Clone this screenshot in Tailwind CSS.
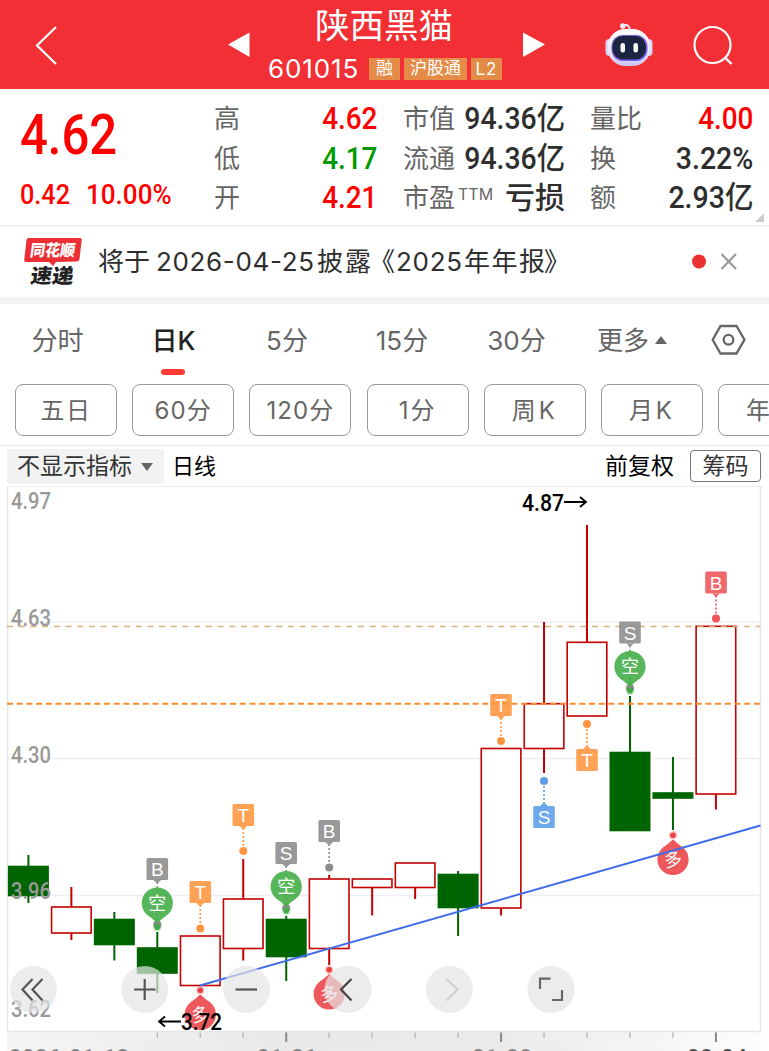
<!DOCTYPE html>
<html lang="zh-CN">
<head>
  <meta charset="UTF-8" />
  <meta name="viewport" content="width=device-width, initial-scale=1.0"/>
  <title>陕西黑猫 601015</title>
  <script src="https://cdn.jsdelivr.net/npm/@tailwindcss/browser@4"></script>
  <style>
    body {
      font-family: Inter, 'Noto Sans CJK SC', sans-serif;
    }
    .num {
      font-family: Roboto, 'Noto Sans CJK SC', sans-serif;
    }
  </style>
</head>
<body class="bg-white w-[769px] h-[1051px] overflow-hidden">

  <!-- Top Bar -->
  <header class="flex h-[89px] bg-[#f12f34] text-white">
    <svg class="w-[228px] h-[89px] shrink-0" viewBox="0 0 228 89" fill="none" stroke="#fff" stroke-width="2.2"><path d="M56 27 37 45.500 56 64"/></svg>
    <svg class="w-[22px] h-[89px] shrink-0" viewBox="0 0 22 89" fill="#fff"><path d="M0 44.500 21.500 32.500V57z"/></svg>
    <div class="w-[268px] flex flex-col items-center">
      <h1 class="text-[34.5px] leading-[52px] h-[52px]">陕西黑猫</h1>
      <div class="flex items-center gap-[4px] h-[34px] whitespace-nowrap pl-[2px]">
        <span class="text-[26px] leading-[34px] w-[97px] tracking-[.9px]">601015</span>
        <span class="bg-[#e38b47] text-[17px] leading-[21px] h-[22px] w-[31px] text-center">融</span>
        <span class="bg-[#e38b47] text-[17px] leading-[21px] h-[22px] w-[63px] text-center">沪股通</span>
        <span class="bg-[#e38b47] text-[17px] leading-[22px] h-[22px] w-[31px] text-center tracking-[1px]">L2</span>
      </div>
    </div>
    <svg class="w-[251px] h-[89px] shrink-0" viewBox="518 0 251 89" fill="none">
      <path d="M523 32.500 545 44.500 523 57z" fill="#fff"/>
      <defs>
        <linearGradient id="shell" x1="0" y1="0" x2="0" y2="1"><stop offset="0" stop-color="#fff"/><stop offset=".7" stop-color="#e6e2fb"/><stop offset="1" stop-color="#c9c3f0"/></linearGradient>
        <linearGradient id="visor" x1="0" y1="0" x2="1" y2="1"><stop offset="0" stop-color="#5d62a8"/><stop offset=".6" stop-color="#8a5cf0"/><stop offset="1" stop-color="#5b6cf5"/></linearGradient>
      </defs>
      <path d="M623 26Q629 23 630 30" stroke="#efeafa" stroke-width="2"/>
      <circle cx="622.800" cy="26" r="2.700" fill="#efeafa"/>
      <rect x="605.500" y="39" width="8" height="17" rx="4" fill="#d9d4f6"/>
      <rect x="644.500" y="39" width="8" height="17" rx="4" fill="#d9d4f6"/>
      <rect x="607.500" y="29" width="43" height="37" rx="18" fill="url(#shell)"/>
      <rect x="611.500" y="35" width="36" height="26" rx="11.500" fill="url(#visor)"/>
      <rect x="612.500" y="36" width="33.500" height="23.500" rx="10.500" fill="#1b2440"/>
      <rect x="620.500" y="43" width="4.500" height="9.500" rx="2.200" fill="#fff"/>
      <rect x="633.500" y="43" width="4.500" height="9.500" rx="2.200" fill="#fff"/>
      <circle cx="712.500" cy="45" r="18" stroke="#fff" stroke-width="2.200"/>
      <path d="M724.500 57 731.500 64" stroke="#fff" stroke-width="2.400"/>
    </svg>
  </header>

  <!-- Quote -->
  <section class="flex relative h-[138px] border-b-2 border-[#f0f0f0] pt-[10px] pl-5 text-[#2e2e2e]">
    <div class="w-[194px] text-[#fe0000] num">
      <p class="text-[56px] leading-[73px] font-medium origin-left scale-x-[.875] w-[120px]">4.62</p>
      <p class="flex text-[28px] leading-[46px] font-medium"><span class="w-[66px] origin-left scale-x-[.9]">0.42</span><span class="origin-left scale-x-[.93]">10.00%</span></p>
    </div>
    <div class="w-[163px] text-[26px] leading-[39.5px]">
      <p class="flex justify-between"><span class="text-[#666]">高</span><span class="num text-[31px] font-medium text-[#fe0000] origin-right scale-x-[.9]">4.62</span></p>
      <p class="flex justify-between"><span class="text-[#666]">低</span><span class="num text-[31px] font-medium text-[#009a00] origin-right scale-x-[.9]">4.17</span></p>
      <p class="flex justify-between"><span class="text-[#666]">开</span><span class="num text-[31px] font-medium text-[#fe0000] origin-right scale-x-[.9]">4.21</span></p>
    </div>
    <div class="w-[162px] ml-[26px] text-[26px] leading-[39.5px] whitespace-nowrap">
      <p class="flex justify-between"><span class="text-[#666]">市值</span><span class="num text-[31px] font-medium origin-right scale-x-[.915]">94.36亿</span></p>
      <p class="flex justify-between"><span class="text-[#666]">流通</span><span class="num text-[31px] font-medium origin-right scale-x-[.915]">94.36亿</span></p>
      <p class="flex justify-between"><span class="text-[#666] flex">市盈<span class="text-[16px] leading-[32px] ml-[3px]">TTM</span></span><span class="text-[30px] font-medium">亏损</span></p>
    </div>
    <div class="w-[163px] ml-[25px] text-[26px] leading-[39.5px] whitespace-nowrap">
      <p class="flex justify-between"><span class="text-[#666]">量比</span><span class="num text-[31px] font-medium text-[#fe0000] origin-right scale-x-[.9]">4.00</span></p>
      <p class="flex justify-between"><span class="text-[#666]">换</span><span class="num text-[31px] font-medium origin-right scale-x-[.92]">3.22%</span></p>
      <p class="flex justify-between"><span class="text-[#666]">额</span><span class="num text-[31px] font-medium origin-right scale-x-[.92]">2.93亿</span></p>
    </div>
    <svg class="absolute left-[755px] top-[124px] w-[9px] h-[9px]" viewBox="0 0 9 9" fill="#ccc"><path d="M9 0V9H0z"/></svg>
  </section>

  <!-- News strip -->
  <section class="flex items-center h-[70px] pl-6 pb-[2px] text-[#2e2e2e]">
    <svg class="w-[58px] h-[52px] shrink-0" viewBox="24 235 58 52">
      <path d="M29 238H80Q82 238 81.700 240L79.500 259Q79.200 261 77 261.500L56 262 53 266 49 262H26Q24 262 24.200 260L26.500 240Q27 238 29 238z" fill="#ec2f35"/>
      <g transform="skewX(-8)" font-family="Noto Sans CJK SC, sans-serif" font-weight="900">
        <text x="65.500" y="256.500" font-size="16" fill="#fff" textLength="45" lengthAdjust="spacingAndGlyphs">同花顺</text>
        <text x="69.500" y="283" font-size="20" fill="#222" textLength="43" lengthAdjust="spacingAndGlyphs">速递</text>
      </g>
    </svg>
    <svg class="ml-4 w-[594px] h-[50px] text-[26px]" viewBox="98 236 594 50" fill="#2e2e2e"><text x="98" y="271" textLength="52">将于</text><text x="156" y="271" textLength="158">2026-04-25</text><text x="317" y="271" textLength="54">披露</text><text x="369" y="271">《</text><text x="396" y="271" textLength="66">2025</text><text x="464" y="271" textLength="81">年年报</text><text x="544" y="271">》</text></svg>
    <svg class="w-[50px] h-[50px] shrink-0" viewBox="692 236 50 50"><circle cx="699" cy="261.500" r="7" fill="#ec2f2f"/><path d="M721.500 254 736 269M736 254 721.500 269" stroke="#999" stroke-width="2.200"/></svg>
  </section>
  <div class="h-[7px] bg-[#f4f4f4]"></div>

  <!-- Period tabs -->
  <nav class="flex h-[80px] text-[26px] leading-[74px] text-[#666] whitespace-nowrap">
    <a class="w-[115px] text-center">分时</a>
    <a class="w-[117px] text-center relative text-[#222] font-medium">日K<span class="absolute left-[46px] top-[65px] w-[24px] h-[6px] rounded-full bg-[#fd3a31]"></span></a>
    <a class="w-[110px] text-center">5分</a>
    <a class="w-[120px] text-center">15分</a>
    <a class="w-[109px] text-center">30分</a>
    <a class="w-[138px] pl-[26px] flex items-center gap-[6px] h-[73px]">更多<svg class="w-[12px] h-[8px] mb-[2px]" viewBox="0 0 12 8" fill="#666"><path d="M6 0 12 8H0z"/></svg></a>
    <svg class="w-[40px] h-[73px]" viewBox="709 304 40 73" fill="none" stroke="#666" stroke-width="2.300"><path d="M720.500 326H736.500L744.500 339.700 736.500 353.500H720.500L712.700 339.700z"/><circle cx="728.500" cy="339.700" r="4.800"/></svg>
  </nav>
  <div class="flex gap-[15.2px] pl-[15px] h-[61px] text-[24px] leading-[51px] text-[#666] whitespace-nowrap overflow-hidden">
    <button class="w-[102px] h-[52px] shrink-0 border border-[#999] rounded-[8px] tracking-[1.5px]">五日</button>
    <button class="w-[102px] h-[52px] shrink-0 border border-[#999] rounded-[8px] tracking-[1.2px]">60分</button>
    <button class="w-[102px] h-[52px] shrink-0 border border-[#999] rounded-[8px] tracking-[1px]">120分</button>
    <button class="w-[102px] h-[52px] shrink-0 border border-[#999] rounded-[8px] tracking-[2px]">1分</button>
    <button class="w-[102px] h-[52px] shrink-0 border border-[#999] rounded-[8px] tracking-[3px]">周K</button>
    <button class="w-[102px] h-[52px] shrink-0 border border-[#999] rounded-[8px] tracking-[3px]">月K</button>
    <button class="w-[102px] h-[52px] shrink-0 border border-[#999] rounded-[8px] tracking-[3px]">年K</button>
  </div>

  <!-- Chart toolbar -->
  <div class="flex h-[41px] border-t border-[#e8e8e8] pl-[7px] pt-[3px] text-[23px] text-black whitespace-nowrap">
    <div class="flex items-center w-[157px] h-[35px] bg-[#f2f2f2] rounded-[3px] pl-[10px] gap-[9px] text-[#333]">不显示指标<svg class="w-[12px] h-[8px]" viewBox="0 0 12 8" fill="#666"><path d="M0 0H12L6 8z"/></svg></div>
    <span class="ml-2 w-[433px] text-[22px] leading-[35px]">日线</span>
    <span class="w-[85px] leading-[35px]">前复权</span>
    <span class="w-[71px] h-[32px] mt-px border border-[#777] rounded-[4px] leading-[30px] text-center text-[#333]">筹码</span>
  </div>

  <!-- K-line chart -->
  <svg class="block w-[769px] h-[565px]" viewBox="0 486 769 565">
    <defs>
      <linearGradient id="axisBg"><stop offset="0" stop-color="#f5f5f5"/><stop offset=".35" stop-color="#e9e9e9"/><stop offset=".65" stop-color="#eaeaea"/><stop offset="1" stop-color="#fdfdfd"/></linearGradient>
    </defs>
    <rect x="7" y="1032" width="754" height="19" fill="url(#axisBg)"/>
    <path d="M7 622H760M7 758.500H760M7 895.500H760" stroke="#efefef" stroke-width="1.500"/>
    <rect x="7.500" y="486" width="753" height="545.500" fill="none" stroke="#e6e6e6" stroke-width="1.500"/>
    <g id="candles"></g>
    <path d="M7 626.500H760" stroke="#d9b07a" stroke-width="1.300" stroke-dasharray="6 5.700"/>
    <path d="M7 703.700H760" stroke="#fb8b2c" stroke-width="2" stroke-dasharray="6 3.700"/>
    <g id="markers"></g>
    <path d="M200 985.500 760.500 825.500" stroke="#3f6bee" stroke-width="1.900"/>
    <g class="num" font-size="24" font-weight="500" fill="#999">
      <text x="11" y="508.500" textLength="40" lengthAdjust="spacingAndGlyphs">4.97</text>
      <text x="11" y="626" textLength="40" lengthAdjust="spacingAndGlyphs">4.63</text>
      <text x="11" y="762.500" textLength="40" lengthAdjust="spacingAndGlyphs">4.30</text>
      <text x="11" y="899" textLength="40" lengthAdjust="spacingAndGlyphs">3.96</text>
      <text x="11" y="1016.500" textLength="40" lengthAdjust="spacingAndGlyphs">3.62</text>
    </g>
    <g id="buttons"></g>
    <g class="num" font-size="24" font-weight="500" fill="#000">
      <text x="522" y="510.500" textLength="42" lengthAdjust="spacingAndGlyphs">4.87</text>
      <text x="181" y="1030" textLength="41" lengthAdjust="spacingAndGlyphs">3.72</text>
    </g>
    <path d="M564 502H586M580 497 586 502 580 507M181 1021.500H160M165 1016.500 159 1021.500 165 1026.500" fill="none" stroke="#000" stroke-width="1.800"/>
    <g id="ticks"></g>
    <g class="num" font-size="22" font-weight="500" fill="#888">
      <text x="9" y="1065" textLength="120">2026-01-13</text>
      <text x="257" y="1065" textLength="60">01-21</text>
      <text x="472" y="1065" textLength="60">01-28</text>
      <text x="687" y="1065" textLength="60" fill="#555">02-04</text>
    </g>
  </svg>

  <script>
    // up/down, body top, body bottom, high, low
    const candles = [
      ['d', 866, 896, 855, 903], ['u', 907, 933, 887, 940], ['d', 919, 945, 912, 960.5],
      ['d', 947.5, 973.5, 932, 993], ['u', 936, 985.5, 936, 985.5], ['u', 899, 948.5, 859, 960.5],
      ['d', 919, 957, 916, 981], ['u', 879, 948.5, 875, 965], ['u', 879, 887.5, 879, 915.5],
      ['u', 863, 887.5, 863, 899], ['d', 874, 908, 871, 936], ['u', 748.5, 908, 748.5, 915.5],
      ['u', 703.7, 748.5, 622, 773], ['u', 642.3, 716, 525, 716], ['d', 752, 831, 696, 831],
      ['d', 792.5, 798.5, 757, 830], ['u', 626.3, 794, 626, 809.5]
    ];
    // letter, x, tag centre, dot, colour
    const tags = [
      ['B', 157.3, 869, 924.5, '#8c8c8c'], ['T', 200.3, 892, 928.5, '#ff963f'], ['T', 243.3, 815, 851, '#ff963f'],
      ['S', 286.2, 853, 908, '#8c8c8c'], ['B', 329.2, 831, 867.5, '#8c8c8c'], ['T', 501, 705, 741, '#ff963f'],
      ['S', 544, 817, 781, '#5b9deb'], ['T', 587, 760, 724, '#ff963f'], ['S', 630, 632.5, 688, '#8c8c8c'],
      ['B', 716, 582.5, 618.5, '#f05458']
    ];
    const bubbles = [
      ['空', 157.3, 903], ['空', 286.2, 886.5], ['空', 630, 666.5],
      ['多', 200.3, 1014.5], ['多', 329.2, 994], ['多', 673, 859.5]
    ];
    const buttons = [
      [33.5, 'M32.500 979 22.500 989.500 32.500 1000.500M42.500 979 32.500 989.500 42.500 1000.500', '#555'],
      [144.7, 'M134 989.500H155.500M144.700 979V1000', '#555'],
      [246.5, 'M235.500 989.500H257', '#555'],
      [348, 'M351.500 979 341 989.500 351.500 1000.500', '#444'],
      [449.5, 'M446.500 979 457.500 989.500 446.500 1000.500', '#d0d0d0'],
      [551, 'M540 989V978.700H550.500M562 990V1000H552', '#666']
    ];

    document.getElementById('candles').innerHTML = candles.map(([dir, top, bottom, high, low], i) => {
      const x = 28.4 + i * 42.97;
      if (dir === 'd') {
        return `<path d="M${x} ${high}V${low}" stroke="#006400" stroke-width="2"/>
          <rect x="${x - 20.5}" y="${top - 0.3}" width="41" height="${bottom - top + 0.6}" fill="#006400"/>`;
      }
      return `<path d="M${x} ${high}V${top}M${x} ${bottom}V${low}" stroke="#c40000" stroke-width="2"/>
        <rect x="${x - 19.8}" y="${top}" width="39.600" height="${bottom - top}" fill="#fff" stroke="#c40000" stroke-width="1.600"/>`;
    }).join('');

    const tagHtml = tags.map(([letter, x, y, dot, color]) => {
      const s = dot > y ? 1 : -1;
      return `<path d="M${x} ${y + 13 * s}V${dot}" stroke="${color}" stroke-width="1.600" stroke-dasharray="2 2"/>
        <circle cx="${x}" cy="${dot}" r="4" fill="${color}"/>
        <g opacity=".88"><rect x="${x - 10.8}" y="${y - 11}" width="21.600" height="22" rx="1.500" fill="${color}"/>
        <path d="M${x - 4} ${y + 11 * s}H${x + 4}L${x} ${y + 14.5 * s}z" fill="${color}"/></g>
        <text x="${x}" y="${y + 7}" font-family="Liberation Sans, sans-serif" font-size="19" text-anchor="middle" fill="#fff">${letter}</text>`;
    }).join('');

    const bubbleHtml = bubbles.map(([word, x, y]) => {
      const up = word === '多';
      const s = up ? -1 : 1;
      const color = up ? '#eb4144' : '#3fad43';
      return `<circle cx="${x}" cy="${y + 24.3 * s}" r="4.300" fill="${color}" opacity=".3"/><circle cx="${x}" cy="${y + 24.3 * s}" r="2.800" fill="${color}"/>
        <g opacity=".88"><circle cx="${x}" cy="${y}" r="15.600" fill="${color}"/>
        <path d="M${x - 10} ${y + 11.5 * s}L${x} ${y + 20 * s}L${x + 10} ${y + 11.5 * s}z" fill="${color}"/></g>
        <text x="${x}" y="${y + 6.5}" font-size="18" text-anchor="middle" fill="#fff" ${up ? `transform="rotate(-10 ${x} ${y})"` : ''}>${word}</text>`;
    }).join('');
    document.getElementById('markers').innerHTML = tagHtml + bubbleHtml;

    document.getElementById('buttons').innerHTML = buttons.map(([x, d, color]) =>
      `<circle cx="${x}" cy="989.500" r="23.500" fill="#e4e4e4" opacity=".7"/><path d="${d}" fill="none" stroke="${color}" stroke-width="2.200"/>`
    ).join('');

    let ticks = '';
    for (let i = 3; i < 17; i++) {
      const x = 28.4 + i * 42.97;
      const major = i % 5 === 1;
      ticks += `<path d="M${x} 1032.500V${major ? 1042 : 1038}" stroke="${major ? '#888' : '#bbb'}" stroke-width="${major ? 2 : 1.5}"/>`;
    }
    document.getElementById('ticks').innerHTML = ticks;
  </script>

</body>
</html>
